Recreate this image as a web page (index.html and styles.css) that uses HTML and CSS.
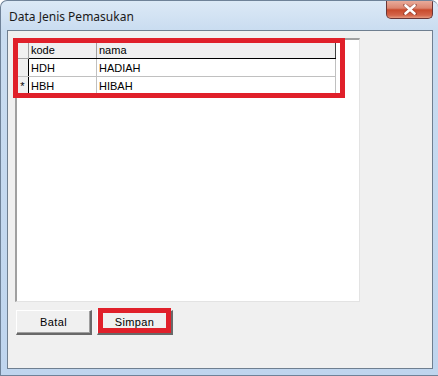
FILE: index.html
```html
<!DOCTYPE html>
<html lang="en">
<head>
  <meta charset="UTF-8">
  <title>Data Jenis Pemasukan</title>
  <link rel="stylesheet" href="styles.css">
</head>
<body>
  <!-- Window -->
  <div class="window">
    <div class="titlebar">
      <span class="title">Data Jenis Pemasukan</span>
      <div class="close-btn">
        <svg width="14" height="11" viewBox="0 0 14 11">
          <path d="M2 1 L12 10 M12 1 L2 10" stroke="#4a1010" stroke-width="4" stroke-linecap="round" opacity="0.35"/>
          <path d="M2.5 1.5 L11.5 9.5 M11.5 1.5 L2.5 9.5" stroke="#ffffff" stroke-width="2.6" stroke-linecap="round"/>
        </svg>
      </div>
    </div>

    <div class="client">
      <!-- Data grid -->
      <div class="grid">
        <table>
          <thead>
            <tr>
              <th class="ind"></th>
              <th class="col-kode">kode</th>
              <th class="col-nama">nama</th>
            </tr>
          </thead>
          <tbody>
            <tr>
              <td class="ind"></td>
              <td>HDH</td>
              <td>HADIAH</td>
            </tr>
            <tr>
              <td class="ind">*</td>
              <td>HBH</td>
              <td>HIBAH</td>
            </tr>
          </tbody>
        </table>
        <div class="mark mark-grid"></div>
      </div>

      <!-- Buttons -->
      <div class="buttons">
        <button class="btn">Batal</button>
        <button class="btn">Simpan<span class="mark mark-btn"></span></button>
      </div>
    </div>
  </div>
</body>
</html>
```

FILE: styles.css
```css
/* Windows 7 style dialog */
body {
  margin: 0;
  padding: 0;
  background-color: #ffffff;
  font-family: "Liberation Sans", Arial, sans-serif;
}
.window {
  width: 438px;
  height: 376px;
  box-sizing: border-box;
  border: 1px solid #6f8298;
  border-right: none;
  border-radius: 7px 7px 0 0;
  background: linear-gradient(to bottom, #dce9f6 0px, #c9dcf0 30px, #bfd5ee 100%);
  display: flex;
  flex-direction: column;
  overflow: hidden;
}
.titlebar {
  height: 29px;
  position: relative;
  display: flex;
  align-items: center;
  padding-left: 8px;
}
.title {
  font-family: "Noto Sans", sans-serif;
  font-size: 12px;
  color: #1a1a1a;
  margin-top: 1px;
}
.close-btn {
  position: absolute;
  top: -1px;
  left: 385px;
  width: 47px;
  height: 19px;
  box-sizing: border-box;
  border: 1px solid #6a3636;
  border-top: none;
  border-radius: 0 0 5px 5px;
  background: linear-gradient(to bottom, #eab0a0 0%, #dc8670 45%, #c84a2c 55%, #d4654a 85%, #e59a80 100%);
  display: flex;
  align-items: center;
  justify-content: center;
}
.client {
  margin-left: 6px;
  width: 426px;
  height: 339px;
  box-sizing: border-box;
  border: 1px solid #6f7f90;
  background-color: #f0f0f0;
  padding: 7px 0 0 7px;
}
.grid {
  position: relative;
  width: 345px;
  height: 264px;
  box-sizing: border-box;
  border-top: 2px solid #a0a0a0;
  border-left: 2px solid #a0a0a0;
  border-right: 1px solid #e3e3e3;
  border-bottom: 1px solid #e3e3e3;
  background-color: #ffffff;
  padding: 1px 0 0 0;
}
table {
  border-collapse: collapse;
  font-size: 11px;
  color: #000000;
}
th, td {
  height: 17px;
  padding: 0 0 0 2px;
  text-align: left;
  font-weight: normal;
  white-space: nowrap;
  border-right: 1px solid #c0c0c0;
  border-bottom: 1px solid #c0c0c0;
}
th {
  background-color: #f0f0f0;
  border-right: 1px solid #a0a0a0;
  border-bottom: 1px solid #000000;
}
th.col-nama {
  border-right: 1px solid #404040;
}
.ind {
  width: 11px;
  padding: 0;
  background-color: #f0f0f0;
  border-right: 1px solid #000000;
  border-bottom: 1px solid #c0c0c0;
  text-align: center;
}
th.ind {
  border-right: 1px solid #a0a0a0;
  border-bottom: 1px solid #a0a0a0;
}
.col-kode {
  width: 65px;
}
.col-nama {
  width: 236px;
}
.buttons {
  display: flex;
  gap: 5px;
  margin-top: 8px;
  padding-left: 1px;
}
.btn {
  position: relative;
  width: 76px;
  height: 25px;
  font-family: "Liberation Sans", Arial, sans-serif;
  font-size: 11px;
  font-weight: normal;
  letter-spacing: 0.4px;
  color: #000000;
  background-color: #f0f0f0;
  border-top: 1px solid #ffffff;
  border-left: 1px solid #ffffff;
  border-right: 2px solid #696969;
  border-bottom: 2px solid #696969;
  box-shadow: inset -1px -1px 0 #a0a0a0;
  padding: 0;
}
/* red annotation boxes */
.mark {
  position: absolute;
  border: 5px solid #e0202a;
  box-sizing: border-box;
}
.mark-grid {
  left: -4px;
  top: -2px;
  width: 332px;
  height: 60px;
}
.mark-btn {
  left: 0px;
  top: -3px;
  width: 73px;
  height: 25px;
}
```
